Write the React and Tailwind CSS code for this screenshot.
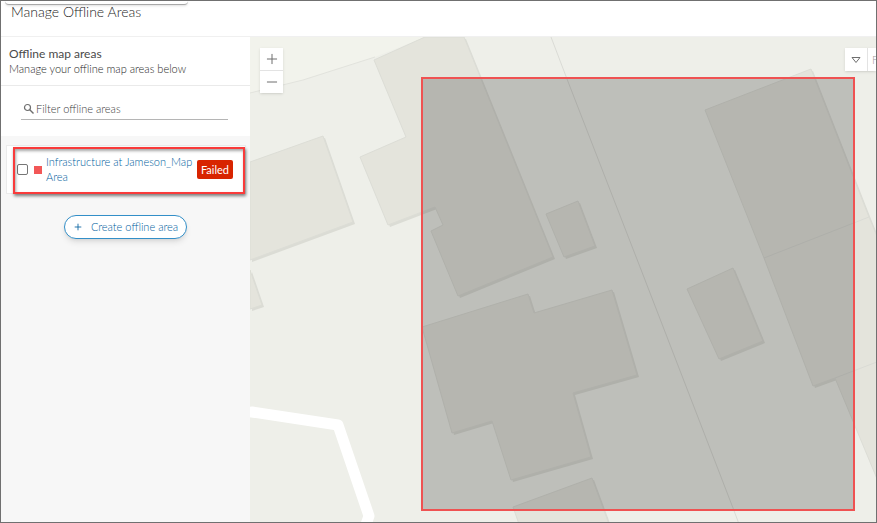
import { Plus, Minus } from 'lucide-react'

const buildings = [
  '250,162 323,136 353,222 250,260',
  '250,270 262,305 250,309',
  '425,37 374,60 406,137 360,157 388,225 435,207 443,225 431,231 458,296 553,257 464,37',
  '546,214 578,201 595,246 564,257',
  '705,110 811,69 869,217 890,268 890,510 835,378 813,386 764,258',
  '687,289 733,268 763,341 719,359',
  '422,327 528,294 534,313 612,290 637,375 573,393 591,457 511,480 492,421 452,433',
  '513,507 592,478 609,524 519,524',
]

const parcelLines = [
  '551,37 567,79 640,267 733,508 739,524',
  '764,258 869,217',
  '835,378 890,357',
]

function MapView() {
  return (
    <svg
      className="absolute inset-0 w-full h-full"
      viewBox="250 37 626 485"
      preserveAspectRatio="xMinYMin slice"
      aria-hidden="true"
    >
      <rect x="250" y="37" width="626" height="485" fill="#eeefe9" />
      <polygon points="250,37 425,37 375,57 303,80 250,93" fill="#f2f3ec" />
      <polyline points="250,93 303,80 375,57" fill="none" stroke="#e2e3dd" />

      {/* Road */}
      <polyline
        points="252,412 338,425 369,516 364,530"
        fill="none"
        stroke="#fff"
        strokeWidth="11"
        strokeLinejoin="round"
        strokeLinecap="round"
      />

      {/* Buildings with their drop shadow */}
      {buildings.map((points) => (
        <g key={points}>
          <polygon points={points} fill="#dbdcd5" transform="translate(2 2)" />
          <polygon points={points} fill="#e4e4dc" stroke="#dcddd6" />
        </g>
      ))}
      {parcelLines.map((points) => (
        <polyline key={points} points={points} fill="none" stroke="#dadbd5" />
      ))}

      {/* Selected extent */}
      <rect x="422" y="78" width="432" height="432" fill="#000" fillOpacity="0.2" stroke="#ef5252" strokeWidth="2" />
    </svg>
  )
}

export default function App() {
  return (
    <div className="flex flex-col min-h-screen border border-[#707070] bg-white font-['Lato','Open_Sans',sans-serif] font-light text-[#262626]">
      {/* Header */}
      <header className="relative h-9 shrink-0 border-b border-[#f0f0f0] px-[10px] overflow-hidden">
        <div className="absolute left-1 top-0 h-1 w-[183px] rounded-b-md border-b border-[#a8a8a8] bg-white shadow" />
        <h1 className="text-sm leading-[22px]">Manage Offline Areas</h1>
      </header>

      <div className="flex flex-1">
        {/* Sidebar */}
        <aside className="flex flex-col w-[249px] shrink-0 bg-[#f7f7f7]">
          <div className="bg-white px-2 pt-[9px] pb-2 border-b border-[#eaeaea]">
            <h2 className="text-xs leading-[15px] font-normal text-[#4a4a4a]">Offline map areas</h2>
            <p className="text-[11px] leading-4">Manage your offline map areas below</p>
          </div>

          <div className="bg-white pl-5 pr-[22px] pt-[13px] pb-4">
            <label className="flex items-center gap-px h-[21px] border-b border-[#b5b5b5] pl-[2px]">
              <svg className="h-3 w-3 shrink-0" viewBox="0 0 12 12" fill="none" stroke="#6e6e6e" aria-hidden="true">
                <circle cx="4.5" cy="4.5" r="3" strokeWidth="1.2" />
                <path d="M6.8 6.8 10.5 10.5" strokeWidth="1.4" />
              </svg>
              <input
                type="text"
                aria-label="Filter offline areas"
                placeholder="Filter offline areas"
                className="w-full min-w-0 bg-transparent text-[11px] leading-4 outline-none placeholder:text-[#404040]"
              />
            </label>
          </div>

          <ul className="pl-[5px] pr-1 pt-[9px]">
            <li className="relative flex items-center h-[49px] border border-[#ebebeb] bg-white pl-[10px] pr-3">
              <div className="absolute left-[6px] top-px -bottom-px right-0 border-2 border-[#f93b3b] shadow-[1px_2px_3px_rgba(0,0,0,0.5),inset_1px_2px_3px_rgba(0,0,0,0.35)] pointer-events-none" />
              <input
                id="area-jameson"
                type="checkbox"
                className="appearance-none h-[11px] w-[11px] shrink-0 rounded-xs border border-[#767676] bg-white"
              />
              <span className="ml-[6px] h-2 w-2 shrink-0 bg-[#f25757]" />
              <label htmlFor="area-jameson" className="ml-1 flex-1 pb-px text-[11px] leading-[15px] text-[#005e9e]">
                Infrastructure at Jameson_Map Area
              </label>
              <span className="rounded-xs bg-[#d82400] px-1 text-[11px] leading-[19px] font-normal text-white">Failed</span>
            </li>
          </ul>

          <button
            type="button"
            className="mt-[21px] self-center flex items-center gap-2 h-6 rounded-full border border-[#338fc8] bg-white px-2 text-[11px] leading-4 text-[#005e9e] shadow-md"
          >
            <Plus className="h-[10px] w-[10px]" />
            Create offline area
          </button>
        </aside>

        {/* Map */}
        <main className="relative flex-1 overflow-hidden">
          <MapView />
          <div className="absolute left-[10px] top-[11px] flex flex-col gap-px bg-[#e3e3e3] shadow">
            <button type="button" aria-label="Zoom in" className="flex items-center justify-center h-[22px] w-[23px] bg-white">
              <Plus className="h-4 w-4 text-[#6e6e6e]" strokeWidth={1.5} />
            </button>
            <button type="button" aria-label="Zoom out" className="flex items-center justify-center h-[22px] w-[23px] bg-white">
              <Minus className="h-4 w-4 text-[#6e6e6e]" strokeWidth={1.5} />
            </button>
          </div>
          <div className="absolute right-0 top-[11px] flex gap-px bg-[#e3e3e3] shadow">
            <button type="button" aria-label="Search source" className="flex items-center justify-center h-[23px] w-[22px] bg-white">
              <svg className="h-2 w-[10px]" viewBox="0 0 10 8" fill="none" stroke="#6e6e6e" aria-hidden="true">
                <path d="M1 1.5h8L5 6.5z" />
              </svg>
            </button>
            <input
              type="text"
              aria-label="Find address"
              placeholder="Find address or place"
              className="h-[23px] w-2 bg-white pl-1 text-[11px] outline-none placeholder:text-[#9b9b9b]"
            />
          </div>
        </main>
      </div>
    </div>
  )
}
